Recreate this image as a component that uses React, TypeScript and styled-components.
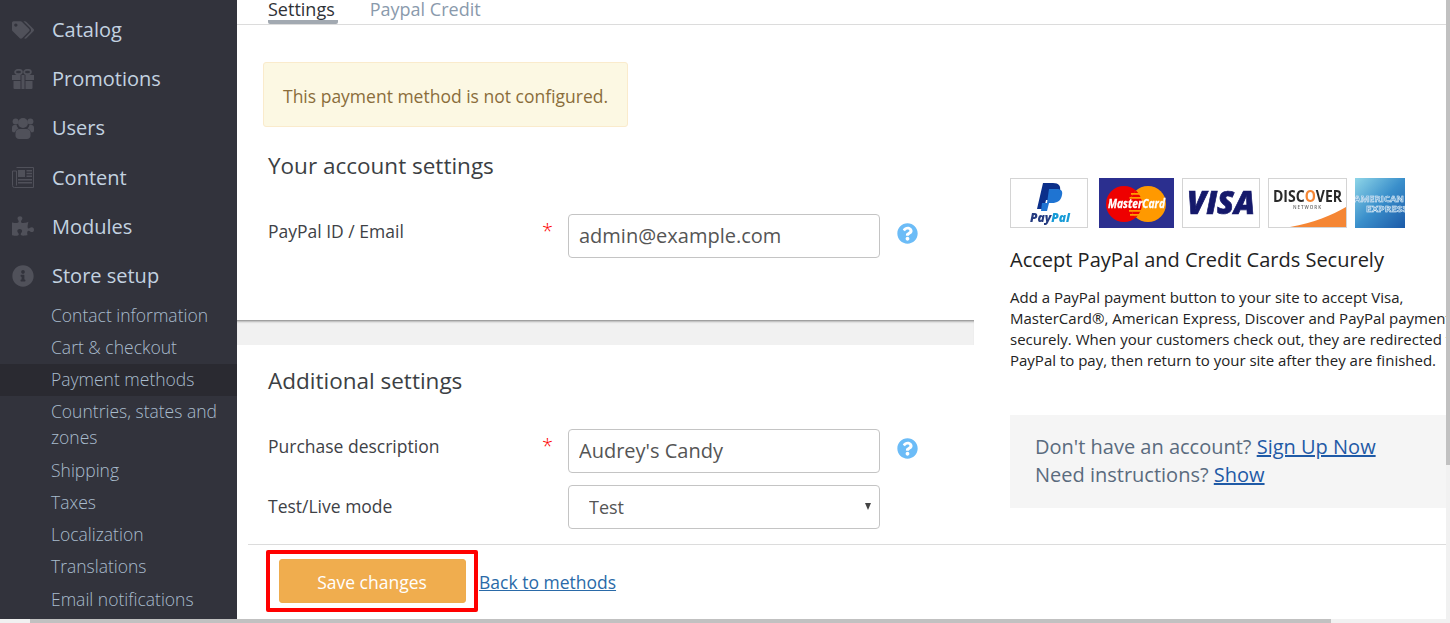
import React from 'react'
import styled, { createGlobalStyle } from 'styled-components'
import { FaTags, FaPuzzlePiece, FaInfoCircle, FaQuestionCircle } from 'react-icons/fa'

const GlobalStyle = createGlobalStyle`
  html, body {
    margin: 0;
    padding: 0;
    height: 100%;
    overflow: hidden;
    background: #fff;
    font-family: "Open Sans", "Noto Sans", sans-serif;
  }
  #root {
    height: 100%;
  }
  * {
    box-sizing: border-box;
  }
`

const Page = styled.div`
  position: relative;
  display: flex;
  width: 1450px;
  height: 623px;
  overflow: hidden;
`

const Sidebar = styled.nav`
  flex: 0 0 237px;
  padding-top: 5px;
  background: #32333c;
`

const MainItem = styled.a`
  display: flex;
  align-items: center;
  height: 49.2px;
  padding-left: 12px;
  color: #c3d2e0;
  font-size: 20px;
  svg {
    flex: 0 0 22px;
    margin-right: 18px;
    color: #50515a;
    font-size: 22px;
  }
`

const SubList = styled.div`
  display: flex;
  flex-direction: column;
  margin-top: -1px;
`

const SubItem = styled.a<{ $active?: boolean }>`
  display: block;
  padding: 2.6px 12px 3.65px 51px;
  background: ${(p) => (p.$active ? '#2a2a31' : 'transparent')};
  color: #a9bccd;
  font-size: 17.5px;
  font-weight: 300;
  line-height: 26px;
`

const Content = styled.main`
  flex: 1;
  display: flex;
  flex-direction: column;
  min-width: 0;
`

const Tabs = styled.div`
  display: flex;
  flex: 0 0 25px;
  gap: 32px;
  padding-left: 31px;
  border-bottom: 1px solid #dcdcdc;
`

const Tab = styled.a<{ $active?: boolean }>`
  height: 24px;
  padding-right: 3px;
  border-bottom: ${(p) => (p.$active ? '4px solid #a2a9b1' : 'none')};
  border-radius: 2px;
  color: ${(p) => (p.$active ? '#2f3237' : '#8a9aac')};
  font-size: 18px;
  line-height: 18px;
`

const Columns = styled.div`
  display: flex;
  flex: 0 0 519px;
`

const FormColumn = styled.div`
  flex: 0 0 737px;
  display: flex;
  flex-direction: column;
`

const Section = styled.section`
  padding: 0 31px;
`

const AccountSection = styled(Section)`
  flex: 0 0 296px;
  padding-top: 37px;
  border-bottom: 1px solid #a0a0a0;
`

const Band = styled.div`
  flex: 0 0 24px;
  background: #f1f1f1;
  box-shadow: inset 0 2px 2px -1px rgba(0, 0, 0, 0.25);
`

const Alert = styled.div`
  width: 365px;
  height: 65px;
  margin-left: -5px;
  padding-left: 19px;
  border: 1px solid #faebcc;
  border-radius: 3px;
  background: #fcf8e3;
  color: #8a6d3b;
  font-size: 17.5px;
  line-height: 67px;
`

const SectionTitle = styled.h2<{ $top: number }>`
  margin: ${(p) => p.$top}px 0 0;
  color: #3c3f44;
  font-size: 22.5px;
  font-weight: 400;
  line-height: 30px;
`

const Field = styled.div<{ $top: number }>`
  display: flex;
  align-items: flex-start;
  height: 44px;
  margin-top: ${(p) => p.$top}px;
`

const Label = styled.label<{ $middle?: boolean }>`
  flex: 0 0 274px;
  color: #3e4146;
  font-size: 17.5px;
  line-height: ${(p) => (p.$middle ? '42px' : '34px')};
`

const Required = styled.span`
  flex: 0 0 26px;
  color: #f00;
  font-size: 20px;
  font-weight: 300;
  line-height: 34px;
`

const NoRequired = styled.span`
  flex: 0 0 26px;
`

const TextInput = styled.input`
  width: 312px;
  height: 44px;
  padding: 0 10px 2px;
  border: 1px solid #c4c4c4;
  border-radius: 4px;
  background: #fff;
  color: #555;
  font-family: inherit;
  font-size: 20px;
  outline: none;
`

const SelectWrap = styled.div`
  position: relative;
  width: 312px;
  height: 44px;
  &::after {
    content: '';
    position: absolute;
    right: 9px;
    top: 18px;
    border-left: 3.5px solid transparent;
    border-right: 3.5px solid transparent;
    border-top: 7px solid #444;
  }
`

const Select = styled.select`
  width: 100%;
  height: 100%;
  padding: 0 20px;
  border: 1px solid #c4c4c4;
  border-radius: 4px;
  background: #fff;
  color: #555;
  font-family: inherit;
  font-size: 18px;
  appearance: none;
  outline: none;
`

const Help = styled.span`
  display: flex;
  margin: 9px 0 0 17px;
  color: #6cbcf7;
  font-size: 21px;
`

const SidePanel = styled.aside`
  flex: 0 0 476px;
  padding: 153px 0 0 36px;
  overflow: hidden;
`

const Cards = styled.div`
  display: flex;
  height: 50px;
  svg {
    display: block;
    filter: blur(0.4px);
  }
`

const PanelTitle = styled.h3`
  margin: 18px 0 0;
  color: #222;
  font-size: 20px;
  font-weight: 400;
  line-height: 28px;
`

const PanelText = styled.p`
  width: 470px;
  margin: 13px 0 0;
  color: #222;
  font-size: 15px;
  line-height: 21px;
  white-space: nowrap;
`

const SignUp = styled.div`
  width: 440px;
  height: 93px;
  margin-top: 44px;
  padding: 18px 25px;
  background: #f5f5f5;
  color: #5a6b7e;
  font-size: 20px;
  line-height: 28px;
  a {
    color: #1f5aa6;
    text-decoration: underline;
  }
`

const Footer = styled.footer`
  display: flex;
  align-items: center;
  height: 69px;
  margin-left: 11px;
  padding: 3px 0 0 18px;
  border-top: 1px solid #dcdcdc;
`

const Highlight = styled.div`
  display: flex;
  flex: 0 0 212px;
  justify-content: center;
  align-items: center;
  height: 62px;
  border: 4px solid #f00;
  border-radius: 2px;
`

const SaveButton = styled.button`
  width: 187px;
  height: 44px;
  padding: 2px 0 0;
  border: 1px solid #eeac4e;
  border-radius: 3px;
  background: #f0ad4e;
  color: #fff;
  font-family: inherit;
  font-size: 17.5px;
`

const BackLink = styled.a`
  margin: 2px 0 0 1px;
  color: #2a6aa8;
  font-size: 17.5px;
  text-decoration: underline;
`

const VerticalBar = styled.div`
  position: absolute;
  top: 0;
  right: 0;
  bottom: 4px;
  width: 4px;
  background: #f1f1f1;
  &::before {
    content: '';
    display: block;
    height: 465px;
    background: #c1c1c1;
  }
`

const HorizontalBar = styled.div`
  position: absolute;
  left: 0;
  right: 0;
  bottom: 0;
  height: 4px;
  padding-left: 30px;
  background: #f1f1f1;
  &::before {
    content: '';
    display: block;
    width: 1301px;
    height: 4px;
    background: #c1c1c1;
  }
`

const GiftIcon = () => (
  <svg width="22" height="20" viewBox="0 0 22 20" fill="currentColor">
    <ellipse cx="6.5" cy="3" rx="3.4" ry="2.2" fill="none" stroke="currentColor" strokeWidth="1.8" />
    <ellipse cx="15.5" cy="3" rx="3.4" ry="2.2" fill="none" stroke="currentColor" strokeWidth="1.8" />
    <path d="M0 6h8.5v5H0zM13.5 6H22v5h-8.5zM1.5 12h7v8h-6a1 1 0 0 1-1-1zM13.5 12h7v7a1 1 0 0 1-1 1h-6z" />
    <path d="M9.5 6h3v14h-3z" />
  </svg>
)

const UsersIcon = () => (
  <svg width="22" height="22" viewBox="0 0 22 22" fill="currentColor">
    <circle cx="11" cy="6" r="5" />
    <circle cx="3.6" cy="4.6" r="3" />
    <circle cx="18.4" cy="4.6" r="3" />
    <path d="M0 10.5c0-1.5 1-2.5 2.4-2.5h2.2c.3 1.6 1 2.7 2 3.5-1.7.6-3.2 2-3.6 3.8H1.6C.6 15.3 0 14.7 0 13.8zM22 10.5c0-1.5-1-2.500-2.4-2.500h-2.200c-.3 1.600-1 2.700-2 3.500 1.700.6 3.200 2 3.600 3.800h1.400c1 0 1.600-.6 1.600-1.500z" />
    <path d="M7.500 12h7c2.500 0 4 1.700 4 4.200v2.300c0 2-1.500 3.500-3.500 3.500h-8c-2 0-3.500-1.500-3.500-3.500v-2.300C3.500 13.700 5 12 7.500 12z" />
  </svg>
)

const NewspaperIcon = () => (
  <svg width="22" height="21" viewBox="0 0 22 21" fill="currentColor">
    <path d="M4.500.5h17v20H2.500a2 2 0 0 1-2-2V4h4M4.500 4v14.500" fill="none" stroke="currentColor" strokeWidth="1" />
    <path d="M6 3h7v7H6zM14.500 3H20v1.400h-5.500zM14.500 5.800H20v1.400h-5.500zM14.500 8.600H20V10h-5.500zM6 12h14v1.400H6zM6 15h14v1.400H6z" />
  </svg>
)

const fontStack = "'Open Sans', sans-serif"

const PayPalLogo = () => (
  <svg width="78" height="50" viewBox="0 0 78 50" style={{ marginRight: 11 }}>
    <rect x="0.500" y="0.500" width="77" height="49" fill="#fff" stroke="#d4d4d4" />
    <path d="M33 5h10c6 0 8 3 7 8-1 6-5 9-11 9h-3l-2 9h-7z" fill="#0b2f8a" />
    <path d="M38 11h9c4 0 6 2 5 6-1 6-5 8-10 8h-3l-2 8h-6l1-8h5l2-14z" fill="#1f74d2" />
    <text x="40" y="44" textAnchor="middle" fontSize="12" fontWeight="800" fontStyle="italic" fontFamily={fontStack} fill="#253b80" textLength="40" lengthAdjust="spacingAndGlyphs">
      Pay<tspan fill="#179bd7">Pal</tspan>
    </text>
  </svg>
)

const MasterCardLogo = () => (
  <svg width="75" height="50" viewBox="0 0 75 50" style={{ marginRight: 8 }}>
    <rect width="75" height="50" fill="#2b2f8f" />
    <circle cx="25" cy="26" r="18" fill="#ee0000" />
    <circle cx="49" cy="26" r="18" fill="#ff9900" />
    <path d="M37 12.600a18 18 0 0 1 0 26.800a18 18 0 0 1 0-26.800z" fill="#ee0000" />
    <path d="M32 15h10v1.800H32zM30.500 19h13v1.800h-13zM30 32h14v1.800H30zM31 36h12v1.800H31z" fill="#ff9900" />
    <text x="37.500" y="30" textAnchor="middle" fontSize="13" fontWeight="700" fontStyle="italic" fontFamily={fontStack} fill="#fff" stroke="#fff" strokeWidth="0.300" textLength="57" lengthAdjust="spacingAndGlyphs">
      MasterCard
    </text>
  </svg>
)

const VisaLogo = () => (
  <svg width="78" height="50" viewBox="0 0 78 50" style={{ marginRight: 8 }}>
    <rect x="0.500" y="0.500" width="77" height="49" fill="#fff" stroke="#d4d4d4" />
    <text x="39" y="36" textAnchor="middle" fontSize="31" fontWeight="800" fontStyle="italic" fontFamily={fontStack} fill="#15196b" stroke="#15196b" strokeWidth="0.700" textLength="68" lengthAdjust="spacingAndGlyphs">
      VISA
    </text>
  </svg>
)

const DiscoverLogo = () => (
  <svg width="79" height="50" viewBox="0 0 79 50" style={{ marginRight: 8 }}>
    <rect x="0.500" y="0.500" width="78" height="49" fill="#fff" stroke="#d4d4d4" />
    <path d="M22 49c24-4 42-12 56-20v20z" fill="#f58634" />
    <text x="39.500" y="24" textAnchor="middle" fontSize="15.500" fontWeight="700" fontFamily={fontStack} fill="#2a2a2a" textLength="69" lengthAdjust="spacingAndGlyphs">
      DISC<tspan fill="#f58634">O</tspan>VER
    </text>
    <text x="39.500" y="31" textAnchor="middle" fontSize="4.500" fontWeight="600" fontFamily={fontStack} fill="#666" letterSpacing="1">
      NETWORK
    </text>
  </svg>
)

const AmexLogo = () => (
  <svg width="50" height="50" viewBox="0 0 50 50">
    <defs>
      <linearGradient id="amex" x1="0" y1="0" x2="1" y2="1">
        <stop offset="0" stopColor="#8fd6e8" />
        <stop offset="0.500" stopColor="#3a8fcb" />
        <stop offset="1" stopColor="#1c5aa8" />
      </linearGradient>
    </defs>
    <rect width="50" height="50" fill="url(#amex)" />
    <text x="-1" y="24" fontSize="9" fontWeight="700" fontFamily={fontStack} fill="#5c9ccf" stroke="#e8f3fa" strokeWidth="0.500" textLength="50" lengthAdjust="spacingAndGlyphs">
      AMERICAN
    </text>
    <text x="11" y="34" fontSize="9" fontWeight="700" fontFamily={fontStack} fill="#5c9ccf" stroke="#e8f3fa" strokeWidth="0.500" textLength="42" lengthAdjust="spacingAndGlyphs">
      EXPRESS
    </text>
  </svg>
)

const mainItems = [
  { label: 'Catalog', icon: <FaTags /> },
  { label: 'Promotions', icon: <GiftIcon /> },
  { label: 'Users', icon: <UsersIcon /> },
  { label: 'Content', icon: <NewspaperIcon /> },
  { label: 'Modules', icon: <FaPuzzlePiece /> },
  { label: 'Store setup', icon: <FaInfoCircle /> },
]

const subItems = [
  'Contact information',
  'Cart & checkout',
  'Payment methods',
  'Countries, states and zones',
  'Shipping',
  'Taxes',
  'Localization',
  'Translations',
  'Email notifications',
]

export default function App() {
  return (
    <Page>
      <GlobalStyle />
      <Sidebar>
        {mainItems.map((item) => (
          <MainItem key={item.label}>
            {item.icon}
            {item.label}
          </MainItem>
        ))}
        <SubList>
          {subItems.map((label) => (
            <SubItem key={label} $active={label === 'Payment methods'}>
              {label}
            </SubItem>
          ))}
        </SubList>
      </Sidebar>

      <Content>
        <Tabs>
          <Tab $active>Settings</Tab>
          <Tab>Paypal Credit</Tab>
        </Tabs>

        <Columns>
          <FormColumn>
            <AccountSection>
              <Alert>This payment method is not configured.</Alert>
              <SectionTitle $top={24}>Your account settings</SectionTitle>
              <Field $top={33}>
                <Label>PayPal ID / Email</Label>
                <Required>*</Required>
                <TextInput defaultValue="admin@example.com" />
                <Help>
                  <FaQuestionCircle />
                </Help>
              </Field>
            </AccountSection>
            <Band />
            <Section>
              <SectionTitle $top={21}>Additional settings</SectionTitle>
              <Field $top={33}>
                <Label>Purchase description</Label>
                <Required>*</Required>
                <TextInput defaultValue="Audrey's Candy" />
                <Help>
                  <FaQuestionCircle />
                </Help>
              </Field>
              <Field $top={12}>
                <Label $middle>Test/Live mode</Label>
                <NoRequired />
                <SelectWrap>
                  <Select defaultValue="Test">
                    <option>Test</option>
                    <option>Live</option>
                  </Select>
                </SelectWrap>
              </Field>
            </Section>
          </FormColumn>

          <SidePanel>
            <Cards>
              <PayPalLogo />
              <MasterCardLogo />
              <VisaLogo />
              <DiscoverLogo />
              <AmexLogo />
            </Cards>
            <PanelTitle>Accept PayPal and Credit Cards Securely</PanelTitle>
            <PanelText>
              Add a PayPal payment button to your site to accept Visa,
              <br />
              MasterCard®, American Express, Discover and PayPal payments
              <br />
              securely. When your customers check out, they are redirected to
              <br />
              PayPal to pay, then return to your site after they are finished.
            </PanelText>
            <SignUp>
              Don't have an account? <a>Sign Up Now</a>
              <br />
              Need instructions? <a>Show</a>
            </SignUp>
          </SidePanel>
        </Columns>

        <Footer>
          <Highlight>
            <SaveButton>Save changes</SaveButton>
          </Highlight>
          <BackLink>Back to methods</BackLink>
        </Footer>
      </Content>

      <VerticalBar />
      <HorizontalBar />
    </Page>
  )
}
